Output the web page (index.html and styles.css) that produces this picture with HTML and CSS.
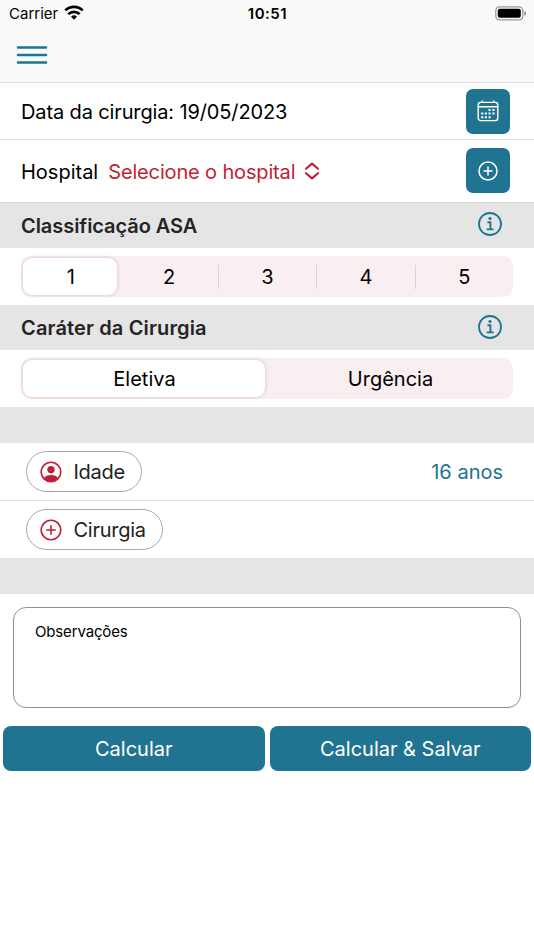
FILE: index.html
```html
<!DOCTYPE html>
<html lang="pt-BR">
<head>
    <meta charset="UTF-8">
    <meta name="viewport" content="width=device-width, initial-scale=1.0">
    <title>Cirurgia</title>
    <link rel="stylesheet" href="styles.css">
</head>
<body>

    <header class="topo">
        <div class="status">
            <div class="operadora">
                <span>Carrier</span>
                <svg width="20" height="15" viewBox="0 0 20 15" fill="none" stroke="#000" stroke-width="2.7">
                    <path d="M1.3 5.4a12.4 12.4 0 0 1 17.4 0"/>
                    <path d="M4.3 9.1a8.2 8.2 0 0 1 11.4 0"/>
                    <path d="M10 14.8l-3-3a4.3 4.3 0 0 1 6 0z" fill="#000" stroke="none"/>
                </svg>
            </div>
            <span class="hora">10:51</span>
            <svg class="bateria" width="32" height="15" viewBox="0 0 32 15">
                <rect x=".8" y=".8" width="27" height="13" rx="3.8" fill="none" stroke="#999" stroke-width="1.3"/>
                <rect x="2.8" y="2.8" width="23" height="9" rx="2" fill="#000"/>
                <path d="M29.4 4.9c2.2.8 2.2 4 0 4.8z" fill="#888"/>
            </svg>
        </div>
        <button class="menu" aria-label="Menu">
            <svg width="32" height="20" viewBox="0 0 32 20" stroke="#207491" stroke-width="2.5" stroke-linecap="round">
                <path d="M2 2.5h28M2 10h28M2 17.5h28"/>
            </svg>
        </button>
    </header>

    <main>
        <div class="linha data">
            <span class="t-data">Data da cirurgia: 19/05/2023</span>
            <button class="quadrado" aria-label="Calendário">
                <svg width="22" height="22" viewBox="0 0 22 22" fill="none" stroke="#fff" stroke-width="1.4" stroke-linecap="round">
                    <rect x="1.2" y="2.4" width="19.6" height="18.2" rx="2.5"/>
                    <path d="M1.2 6.7h19.6M5.2 .9v1.5M16.8 .9v1.5"/>
                    <path d="M12.5 10h.1M16.4 10h.1M5.2 13.6h.1M8.8 13.6h.1M12.5 13.6h.1M16.4 13.6h.1M5.2 17.2h.1M8.8 17.2h.1M12.5 17.2h.1" stroke-width="2" stroke-linecap="square"/>
                </svg>
            </button>
        </div>

        <div class="linha hospital">
            <span>Hospital</span>
            <span class="selecione">Selecione o hospital</span>
            <svg class="setas" width="16" height="18" viewBox="0 0 16 18" fill="none" stroke="#c11f36" stroke-width="2.1" stroke-linecap="round" stroke-linejoin="round">
                <path d="M2 6.8L8 1.6l6 5.2M2 11.2l6 5.2 6-5.2"/>
            </svg>
            <button class="quadrado" aria-label="Adicionar hospital">
                <svg width="20" height="20" viewBox="0 0 20 20" fill="none" stroke="#fff" stroke-width="1.5" stroke-linecap="round">
                    <circle cx="10" cy="10" r="9"/>
                    <path d="M10 6v8M6 10h8"/>
                </svg>
            </button>
        </div>

        <div class="secao asa">
            <h2 class="t-asa">Classificação ASA</h2>
            <svg width="24" height="24" viewBox="0 0 24 24" fill="none" stroke="#207491" stroke-width="1.8">
                <circle cx="12" cy="12" r="11"/>
                <path d="M9.4 10.3h3v6.8M8.6 17.4h7" stroke-width="1.9"/>
                <circle cx="12" cy="6.5" r="1.6" fill="#207491" stroke="none"/>
            </svg>
        </div>
        <div class="faixa">
            <div class="segmentos cinco">
                <button class="ativo">1</button>
                <button>2</button>
                <button class="divisa">3</button>
                <button class="divisa">4</button>
                <button class="divisa">5</button>
            </div>
        </div>

        <div class="secao">
            <h2 class="t-carater">Caráter da Cirurgia</h2>
            <svg width="24" height="24" viewBox="0 0 24 24" fill="none" stroke="#207491" stroke-width="1.8">
                <circle cx="12" cy="12" r="11"/>
                <path d="M9.4 10.3h3v6.8M8.6 17.4h7" stroke-width="1.9"/>
                <circle cx="12" cy="6.5" r="1.6" fill="#207491" stroke="none"/>
            </svg>
        </div>
        <div class="faixa">
            <div class="segmentos dois">
                <button class="ativo">Eletiva</button>
                <button>Urgência</button>
            </div>
        </div>

        <div class="espaco"></div>

        <div class="linha idade">
            <button class="pilula">
                <svg width="22" height="22" viewBox="0 0 22 22">
                    <circle cx="11" cy="11" r="9.8" fill="none" stroke="#c11f36" stroke-width="1.6"/>
                    <circle cx="11" cy="8.6" r="3.7" fill="#c11f36"/>
                    <path d="M4 17.3c1-2.2 3.6-3.3 7-3.3s6 1.1 7 3.3c-1.6 2.2-4.2 3.5-7 3.5s-5.4-1.3-7-3.5z" fill="#c11f36"/>
                </svg>
                <span>Idade</span>
            </button>
            <span class="valor">16 anos</span>
        </div>
        <div class="linha cirurgia">
            <button class="pilula">
                <svg width="22" height="22" viewBox="0 0 22 22" fill="none" stroke="#c11f36" stroke-width="1.6" stroke-linecap="round">
                    <circle cx="11" cy="11" r="9.8"/>
                    <path d="M11 6.8v8.4M6.8 11h8.4"/>
                </svg>
                <span>Cirurgia</span>
            </button>
        </div>

        <div class="espaco"></div>

        <div class="observacoes">Observações</div>

        <div class="acoes">
            <button>Calcular</button>
            <button>Calcular &amp; Salvar</button>
        </div>
    </main>

</body>
</html>
```
FILE: styles.css
```css
* { box-sizing: border-box; }
body { margin: 0; background: #fff; color: #000; font-family: Inter, "Liberation Sans", sans-serif; font-size: 20px; line-height: 24px; white-space: nowrap; }
button { font: inherit; color: inherit; background: none; border: none; margin: 0; padding: 0; }
svg { display: block; flex: none; }

.topo { height: 83px; background: #f9f9f9; border-bottom: 1px solid #e0e0e0; }
.status { display: grid; grid-template-columns: 1fr auto 1fr; height: 27px; padding: 0 7px 0 9px; align-items: center; font-size: 15px; line-height: 18px; }
.operadora { display: flex; align-items: center; gap: 6px; }
.operadora svg { margin-top: -2px; }
.operadora span { padding-top: 1px; }
.hora { font-weight: 600; letter-spacing: .5px; padding: 1px 1px 0 0; }
.bateria { justify-self: end; }
.menu { display: block; margin: 18px 0 0 16px; }

.linha { display: flex; align-items: center; padding: 0 24px 0 21px; }
.data { height: 57px; border-bottom: 1px solid #e0e0e0; }
.t-data { letter-spacing: -.13px; padding-top: 2px; }
.hospital { height: 62px; padding-bottom: 1px; }
.hospital span { padding-top: 2px; }
.selecione { color: #c11f36; margin-left: 10px; letter-spacing: -.15px; }
.setas { margin-left: 9px; }
.quadrado { display: flex; align-items: center; justify-content: center; width: 44px; height: 45px; margin-left: auto; background: #207491; border-radius: 7px; }

.secao { display: flex; align-items: center; justify-content: space-between; height: 45px; padding: 0 32px 0 21px; background: #e5e5e5; }
.asa { height: 46px; border-top: 1px solid #dadada; }
h2 { margin: 0; font-size: 20px; font-weight: 600; color: #242424; }
.t-asa { letter-spacing: -.06px; }
.t-carater { letter-spacing: .14px; }
.secao svg { margin-top: -2px; }
.asa svg { margin-top: -3px; }

.faixa { height: 57px; padding: 8px 21px; }
.segmentos { display: grid; height: 41px; background: #f9eef0; border-radius: 10px; }
.cinco { grid-template-columns: repeat(5, 1fr); }
.dois { grid-template-columns: 1fr 1fr; }
.segmentos button { display: flex; align-items: center; justify-content: center; padding: 1px 0 0 1px; }
.segmentos .ativo { margin: 2px; background: #fff; border-radius: 9px; box-shadow: 0 0 4px rgba(80, 20, 30, .2); }
.divisa { background: linear-gradient(#ddd2d4, #ddd2d4) left center / 1px 24px no-repeat; }

.espaco { height: 36px; background: #e5e5e5; }
.idade { height: 58px; padding: 0 31px 0 26px; border-bottom: 1px solid #e0e0e0; }
.cirurgia { height: 57px; padding-left: 26px; }
.pilula { display: flex; align-items: center; gap: 12px; height: 41px; padding: 0 16px 0 13px; border: 1px solid #a8a8a8; border-radius: 21px; color: #222; letter-spacing: -.25px; }
.pilula svg { margin-left: -.5px; }
.pilula span { padding-top: 1px; }
.valor { margin-left: auto; color: #207491; }

.observacoes { height: 101px; margin: 13px 13px 0; padding: 15px 21px; border: 1px solid #909090; border-radius: 13px; font-size: 15px; line-height: 18px; letter-spacing: -.15px; }
.acoes { display: grid; grid-template-columns: 1fr 1fr; gap: 5px; padding: 18px 3px 0; }
.acoes button { height: 45px; background: #207491; border-radius: 8px; color: #fff; }
```
